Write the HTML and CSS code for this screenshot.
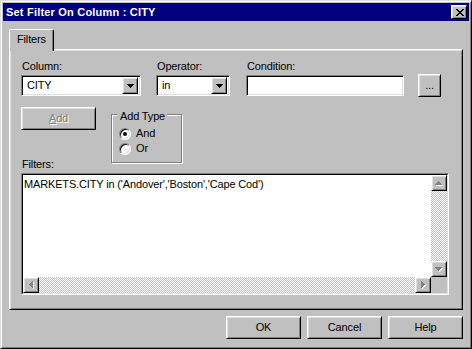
FILE: index.html
```html
<!DOCTYPE html>
<html>
<head>
<meta charset="utf-8">
<title>Set Filter On Column : CITY</title>
<link rel="stylesheet" href="styles.css">
</head>
<body>
<div class="window">
  <div class="titlebar">
    <span class="title">Set Filter On Column : CITY</span>
    <div class="close raised">
      <svg width="8" height="7" viewBox="0 0 8 7" shape-rendering="crispEdges"><path fill="#000" d="M0 0h2v1H0zM6 0h2v1H6zM1 1h2v1H1zM5 1h2v1H5zM2 2h4v1H2zM3 3h2v1H3zM2 4h4v1H2zM1 5h2v1H1zM5 5h2v1H5zM0 6h2v1H0zM6 6h2v1H6z"/></svg>
    </div>
  </div>
  <div class="body">
    <div class="tabs"><div class="tab">Filters</div></div>
    <div class="panel">
      <div class="row1">
        <div class="field w-col">
          <div class="label">Column:</div>
          <div class="combo sunken">
            <span class="value">CITY</span>
            <div class="drop raised"><svg width="7" height="4" viewBox="0 0 7 4" shape-rendering="crispEdges"><path fill="#000" d="M0 0h7v1H0zM1 1h5v1H1zM2 2h3v1H2zM3 3h1v1H3z"/></svg></div>
          </div>
        </div>
        <div class="field w-op">
          <div class="label">Operator:</div>
          <div class="combo sunken">
            <span class="value">in</span>
            <div class="drop raised"><svg width="7" height="4" viewBox="0 0 7 4" shape-rendering="crispEdges"><path fill="#000" d="M0 0h7v1H0zM1 1h5v1H1zM2 2h3v1H2zM3 3h1v1H3z"/></svg></div>
          </div>
        </div>
        <div class="field w-cond">
          <div class="label">Condition:</div>
          <div class="input sunken"></div>
        </div>
        <div class="btn raised dots">...</div>
      </div>
      <div class="row2">
        <div class="btn raised add disabled"><span><u>A</u>dd</span></div>
        <div class="group">
          <div class="legend">Add Type</div>
          <div class="opt"><div class="radio checked"></div><span>And</span></div>
          <div class="opt"><div class="radio"></div><span>Or</span></div>
        </div>
        <div class="label filters-label">Filters:</div>
      </div>
      <div class="textarea">
        <div class="ta-inner">
          <div class="ta-text">MARKETS.CITY in ('Andover','Boston','Cape Cod')</div>
          <div class="vscroll">
            <div class="sbtn raised"><svg width="8" height="5" viewBox="0 0 8 5" shape-rendering="crispEdges"><path fill="#fff" d="M4 1h1v1H4zM3 2h3v1H3zM2 3h5v1H2zM1 4h7v1H1z"/><path fill="#808080" d="M3 0h1v1H3zM2 1h3v1H2zM1 2h5v1H1zM0 3h7v1H0z"/></svg></div>
            <div class="track"></div>
            <div class="sbtn raised"><svg width="8" height="5" viewBox="0 0 8 5" shape-rendering="crispEdges"><path fill="#fff" d="M1 1h7v1H1zM2 2h5v1H2zM3 3h3v1H3zM4 4h1v1H4z"/><path fill="#808080" d="M0 0h7v1H0zM1 1h5v1H1zM2 2h3v1H2zM3 3h1v1H3z"/></svg></div>
          </div>
          <div class="hscroll">
            <div class="sbtn raised"><svg width="5" height="8" viewBox="0 0 5 8" shape-rendering="crispEdges"><path fill="#fff" d="M1 4h1v1H1zM2 3h1v3H2zM3 2h1v5H3zM4 1h1v7H4z"/><path fill="#808080" d="M0 3h1v1H0zM1 2h1v3H1zM2 1h1v5H2zM3 0h1v7H3z"/></svg></div>
            <div class="track"></div>
            <div class="sbtn raised"><svg width="5" height="8" viewBox="0 0 5 8" shape-rendering="crispEdges"><path fill="#fff" d="M1 1h1v7H1zM2 2h1v5H2zM3 3h1v3H3zM4 4h1v1H4z"/><path fill="#808080" d="M0 0h1v7H0zM1 1h1v5H1zM2 2h1v3H2zM3 3h1v1H3z"/></svg></div>
          </div>
          <div class="corner"></div>
        </div>
      </div>
    </div>
    <div class="buttons">
      <div class="btn raised">OK</div>
      <div class="btn raised">Cancel</div>
      <div class="btn raised">Help</div>
    </div>
  </div>
</div>
</body>
</html>
```
FILE: styles.css
```css
* { box-sizing: border-box; }
html, body { margin: 0; padding: 0; }
body {
  background: #c0c0c0;
  font-family: "Liberation Sans", Arial, sans-serif;
  font-size: 11px;
  line-height: 13px;
  letter-spacing: -0.15px;
  color: #000;
}
.window {
  width: 472px;
  height: 349px;
  background: #c0c0c0;
  border: 1px solid;
  border-color: #dfdfdf #000 #000 #dfdfdf;
  box-shadow: inset 1px 1px #fff, inset -1px -1px #808080;
  padding: 2px;
}
.raised {
  background: #c0c0c0;
  border: 1px solid;
  border-color: #fff #000 #000 #fff;
  box-shadow: inset 1px 1px #dfdfdf, inset -1px -1px #808080;
}
.sunken {
  background: #fff;
  border: 1px solid;
  border-color: #808080 #fff #fff #808080;
  box-shadow: inset 1px 1px #000, inset -1px -1px #dfdfdf;
}
.titlebar {
  height: 18px;
  background: #000080;
  color: #fff;
  display: flex;
  align-items: center;
  justify-content: space-between;
  padding: 0 2px 0 3px;
}
.title { font-weight: bold; letter-spacing: 0.2px; }
.close {
  width: 16px;
  height: 14px;
  display: flex;
  align-items: center;
  justify-content: center;
  padding-left: 1px;
}
.close svg { display: block; }
.body { padding: 8px 6px 0 6px; }
.tabs { display: flex; height: 20px; }
.tab {
  position: relative;
  z-index: 1;
  width: 45px;
  height: 22px;
  background: #c0c0c0;
  border-top: 1px solid #fff;
  border-left: 1px solid #fff;
  border-right: 1px solid #000;
  border-radius: 2px 2px 0 0;
  box-shadow: inset -1px 0 #808080;
  padding: 3px 0 0 7px;
}
.panel {
  width: 454px;
  height: 261px;
  border: 1px solid;
  border-color: #fff #000 #000 #fff;
  box-shadow: inset 1px 1px #dfdfdf, inset -1px -1px #808080;
  padding: 10px 0 0 11px;
}
.row1 { display: flex; align-items: flex-end; }
.field { display: flex; flex-direction: column; }
.label { padding-left: 1px; height: 13px; }
.field .label { margin-bottom: 2px; }
.w-col { width: 120px; }
.w-op { width: 74px; margin-left: 15px; }
.w-cond { width: 158px; margin-left: 16px; }
.combo {
  height: 21px;
  display: flex;
  align-items: center;
  justify-content: space-between;
  padding: 2px;
}
.combo .value { padding-left: 3px; }
.drop {
  width: 16px;
  height: 17px;
  display: flex;
  align-items: center;
  justify-content: center;
}
.drop svg { display: block; }
.input { height: 21px; }
.btn {
  display: flex;
  align-items: center;
  justify-content: center;
  width: 75px;
  height: 23px;
}
.dots {
  width: 23px;
  margin-left: 14px;
  margin-bottom: -1px;
}
.row2 {
  display: grid;
  grid-template-columns: 75px 71px;
  grid-template-rows: 51px 13px;
  column-gap: 15px;
  margin-top: 11px;
}
.add { grid-column: 1; grid-row: 1; align-self: start; }
.disabled { color: #808080; text-shadow: 1px 1px #fff; }
.filters-label { grid-column: 1; grid-row: 2; }
.group {
  grid-column: 2;
  grid-row: 1 / 3;
  align-self: start;
  position: relative;
  margin-top: 7px;
  height: 49px;
  border: 1px solid #808080;
  box-shadow: inset 1px 1px #fff, 1px 1px #fff;
  padding: 11px 0 0 7px;
}
.legend {
  position: absolute;
  top: -5px;
  left: 5px;
  padding: 0 2px 0 3px;
  background: #c0c0c0;
}
.opt { display: flex; align-items: center; height: 15px; }
.opt span { margin-left: 5px; }
.radio {
  position: relative;
  width: 12px;
  height: 12px;
  border-radius: 50%;
  background: #fff;
  border: 1px solid;
  border-color: #808080 #fff #fff #808080;
  box-shadow: inset 1px 1px #000, inset -1px -1px #dfdfdf;
}
.radio.checked::after {
  content: "";
  position: absolute;
  left: 3px;
  top: 3px;
  width: 4px;
  height: 4px;
  border-radius: 50%;
  background: #000;
}
.textarea {
  margin-top: 2px;
  width: 428px;
  height: 122px;
  border: 1px solid;
  border-color: #808080 #fff #fff #808080;
}
.ta-inner {
  height: 100%;
  border: 1px solid;
  border-color: #000 #dfdfdf #dfdfdf #000;
  display: grid;
  grid-template-columns: 408px 16px;
  grid-template-rows: 102px 16px;
}
.ta-text { background: #fff; padding: 3px 0 0 1px; white-space: nowrap; overflow: hidden; }
.vscroll { display: flex; flex-direction: column; }
.hscroll { display: flex; }
.track {
  flex: 1;
  background: repeating-conic-gradient(#c0c0c0 0 25%, #fff 0 50%) 0 0 / 2px 2px;
}
.sbtn {
  width: 16px;
  height: 16px;
  flex: none;
  display: flex;
  align-items: center;
  justify-content: center;
}
.sbtn svg { display: block; }
.corner { background: #c0c0c0; }
.buttons {
  display: flex;
  justify-content: flex-end;
  gap: 6px;
  margin-top: 6px;
}
```
